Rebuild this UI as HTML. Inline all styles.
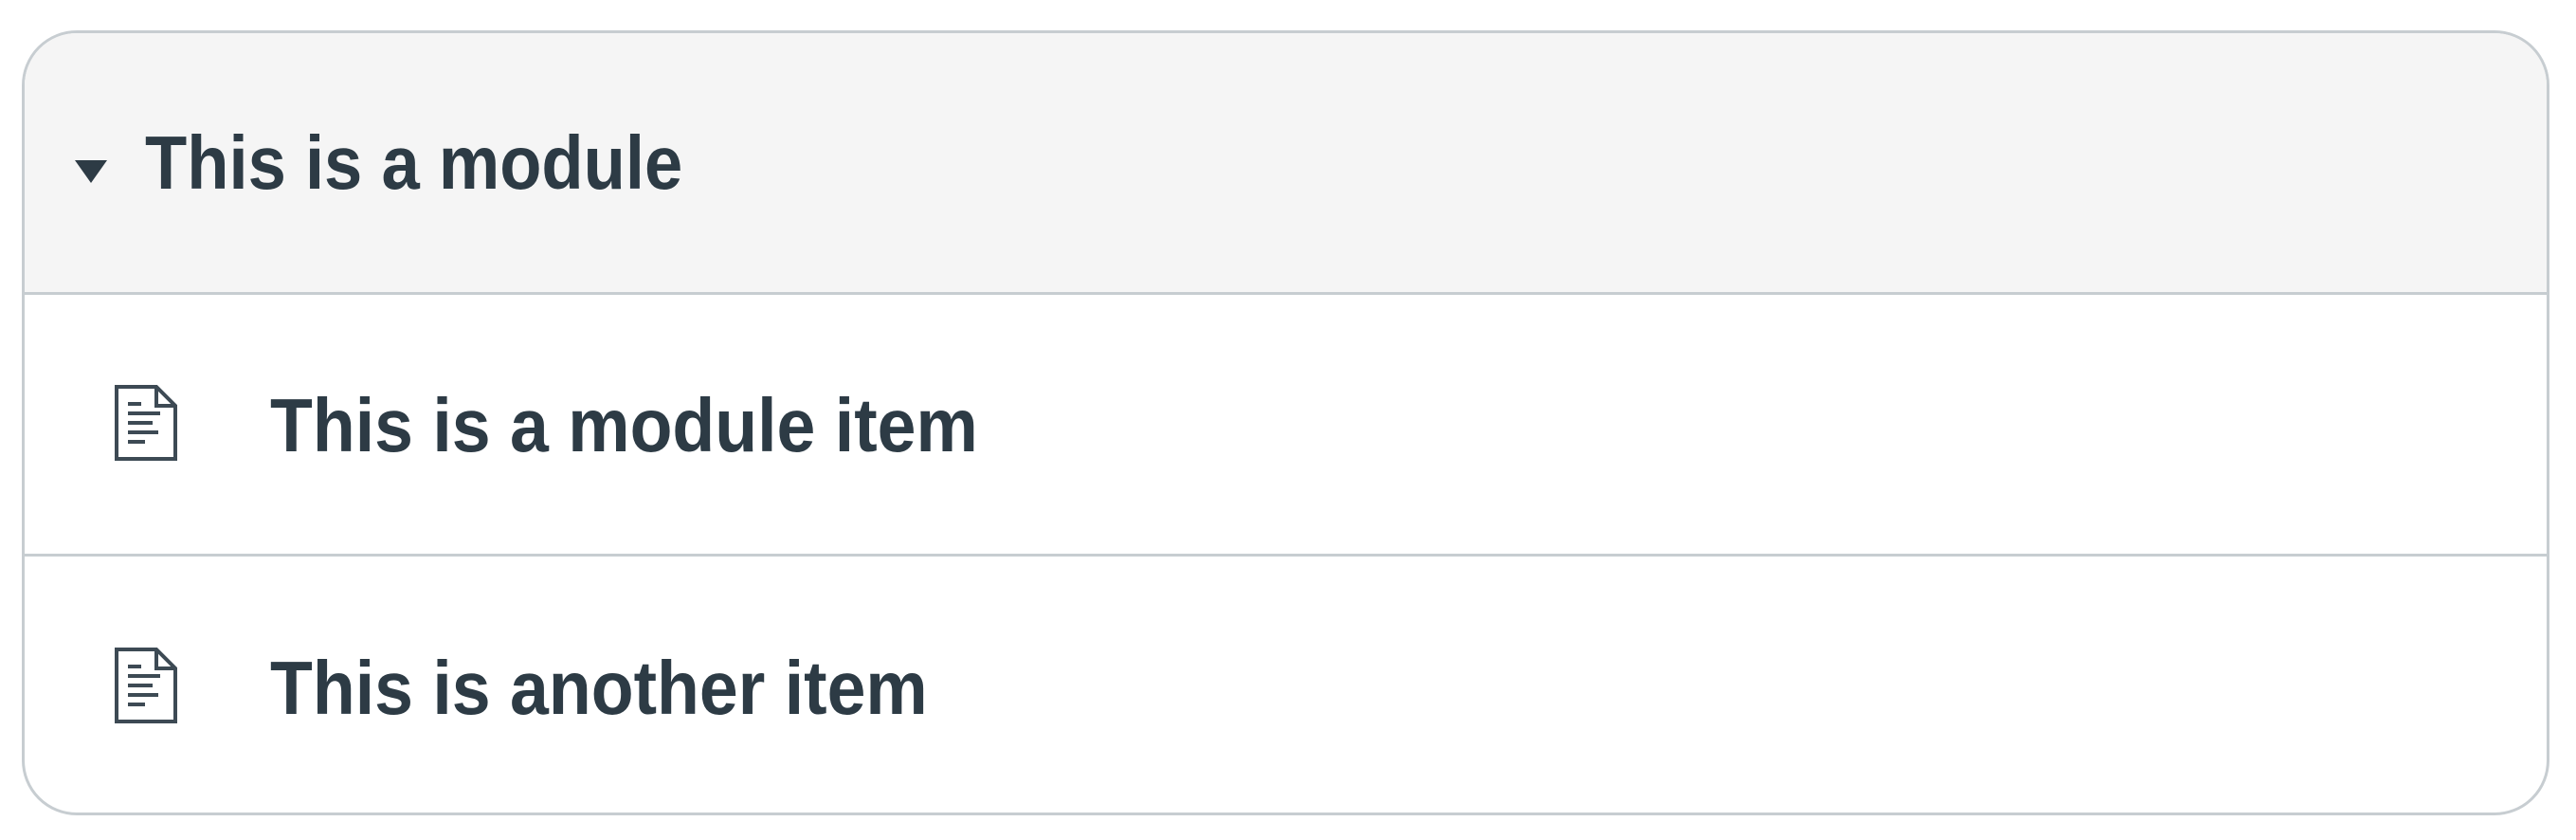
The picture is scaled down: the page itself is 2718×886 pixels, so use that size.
<!DOCTYPE html>
<html><head><style>
html,body{margin:0;padding:0;background:#fff;width:2718px;height:886px;overflow:hidden}
.box{position:absolute;left:23px;top:32px;width:2661px;height:822px;border:3px solid #c7cdd1;border-radius:58px;overflow:hidden;background:#fff}
.hdr{position:absolute;left:0;top:0;right:0;height:273px;background:#f5f5f5;border-bottom:3px solid #c7cdd1}
.div{position:absolute;left:0;right:0;top:549px;height:3px;background:#c7cdd1}
.t{position:absolute;font-family:"Liberation Sans",sans-serif;font-weight:bold;color:#2d3b45;font-size:80px;line-height:1;white-space:nowrap;transform:scaleX(0.905);transform-origin:left top}
.i{transform:scaleX(0.918)}
</style></head><body>
<div class="box">
<div class="hdr"></div>
<div class="div"></div>
<svg style="position:absolute;left:53px;top:134px" width="36" height="26" viewBox="0 0 36 26"><path d="M0 0H34L17 24Z" fill="#2d3b45"/></svg>
<div class="t" style="left:127px;top:97px">This is a module</div>
<svg style="position:absolute;left:95px;top:371px" width="66" height="80" viewBox="0 0 66 80" fill="none" stroke="#3d4a54" stroke-width="4"><path d="M2 2H44L64 22V78H2Z M44 2V22H64"/><path d="M14 20H28M14 30H48M14 40H40M14 50H46M14 60H32" stroke-width="4"/></svg>
<div class="t i" style="left:259px;top:374px">This is a module item</div>
<svg style="position:absolute;left:95px;top:648px" width="66" height="80" viewBox="0 0 66 80" fill="none" stroke="#3d4a54" stroke-width="4"><path d="M2 2H44L64 22V78H2Z M44 2V22H64"/><path d="M14 20H28M14 30H48M14 40H40M14 50H46M14 60H32" stroke-width="4"/></svg>
<div class="t i" style="left:259px;top:651px">This is another item</div>
</div>
</body></html>
